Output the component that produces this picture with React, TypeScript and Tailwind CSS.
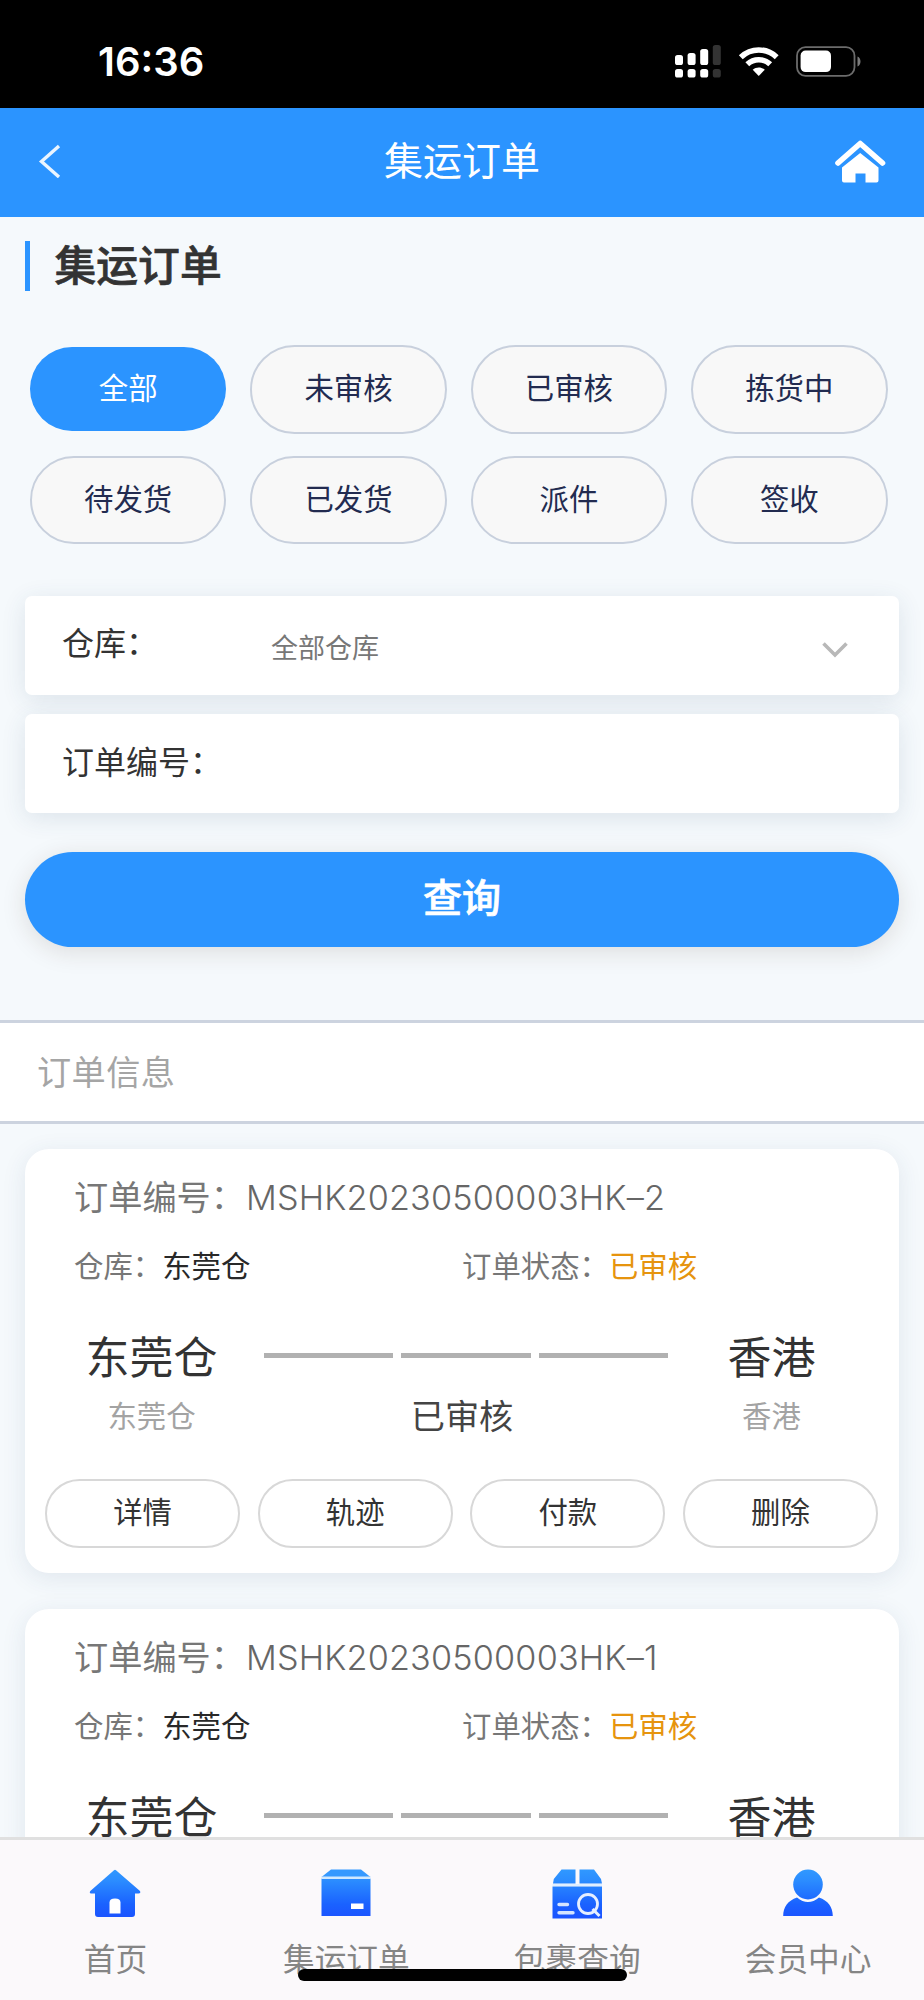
import React from "react";

type Order = { no: string; warehouse: string; status: string; from: string; to: string };

const filters = ["全部", "未审核", "已审核", "拣货中", "待发货", "已发货", "派件", "签收"];

const orders: Order[] = [
  { no: "MSHK20230500003HK–2", warehouse: "东莞仓", status: "已审核", from: "东莞仓", to: "香港" },
  { no: "MSHK20230500003HK–1", warehouse: "东莞仓", status: "已审核", from: "东莞仓", to: "香港" },
];

const actions = ["详情", "轨迹", "付款", "删除"];

function Colon() {
  return <span className="inline-block -translate-y-[0.04em]">：</span>;
}

function StatusBar() {
  return (
    <div className="flex h-[108px] shrink-0 items-start bg-black text-white">
      <span className="ml-[98px] mt-[38px] text-[40px] leading-[48px] font-semibold">16:36</span>
      <div className="ml-auto mr-[62px] mt-[45px] flex items-start">
        <svg width="47" height="33" viewBox="0 0 47 33" fill="#fff">
          <rect x="0" y="10" width="8" height="10" rx="2.6" />
          <rect x="12.6" y="8" width="8" height="12" rx="2.6" />
          <rect x="25.2" y="4" width="8" height="16" rx="2.6" />
          <rect x="37.8" y="0" width="8" height="20" rx="2.6" fill="#333" />
          <rect x="0" y="24" width="8" height="8.6" rx="2.6" />
          <rect x="12.6" y="24" width="8" height="8.6" rx="2.6" />
          <rect x="25.2" y="24" width="8" height="8.6" rx="2.6" />
          <rect x="37.8" y="24" width="8" height="8.6" rx="2.6" fill="#333" />
        </svg>
        <svg className="ml-[16px] mt-px" width="42" height="31" viewBox="0 0 42 31" fill="none" stroke="#fff" strokeWidth="5.6">
          <path d="M2.8 11.2C13 1.6 28.500 1.600 38.700 11.200" />
          <path d="M9.300 18.200C15.800 12.200 25.700 12.200 32.200 18.200" />
          <path d="M14.700 23.700C18.200 20.600 23.300 20.600 26.800 23.700L20.750 30Z" fill="#fff" stroke="none" />
        </svg>
        <svg className="ml-[16px] mt-px" width="66" height="31" viewBox="0 0 66 31">
          <rect x="1" y="1.200" width="57.500" height="28.600" rx="8.500" fill="none" stroke="#6c6c6c" strokeWidth="1.800" />
          <rect x="4.600" y="4.600" width="30.400" height="21.500" rx="5" fill="#fff" />
          <path d="M61.500 10.500C65.500 12 65.500 19 61.500 20.500Z" fill="#7a7a7a" />
        </svg>
      </div>
    </div>
  );
}

function Header() {
  return (
    <header className="grid h-[109px] shrink-0 grid-cols-[1fr_auto_1fr] items-center bg-[#2b94ff] pb-[3px] text-white">
      <svg className="ml-[38px]" width="24" height="34" viewBox="0 0 24 34" fill="none" stroke="#fff" strokeOpacity=".9" strokeWidth="3.4">
        <path d="M21 2L3.500 17.500L21 33" />
      </svg>
      <span className="text-[39px] leading-[56px]">集运订单</span>
      <svg className="mr-[38px] justify-self-end" width="52" height="46" viewBox="0 0 52 46" fill="#fff">
        <path d="M4 25L26.200 5.500L48.500 25" fill="none" stroke="#fff" strokeWidth="5.6" strokeLinecap="round" strokeLinejoin="round" />
        <path d="M26.200 15L44.500 29.500V42.500Q44.500 44.500 42.500 44.500H31.500V35.500H21.500V44.500H10Q8 44.500 8 42.500V29.500Z" />
      </svg>
    </header>
  );
}

function OrderCard({ order }: { order: Order }) {
  return (
    <article className="mx-[25px] h-[424px] shrink-0 rounded-[24px] bg-white pt-[23px] shadow-[0_5px_24px_rgba(40,70,110,0.10)]">
      <div className="pl-[49px] text-[34.2px] leading-[52px] text-[#777]">
        订单编号
        <Colon />
        <span className="ml-px font-light tracking-[0.18px] text-[#666]">{order.no}</span>
      </div>
      <div className="mt-[21px] grid grid-cols-2 text-[29.400px] leading-[44px] text-[#777]">
        <div className="pl-[49px]">
          仓库
          <Colon />
          <span className="text-[#282828]">{order.warehouse}</span>
        </div>
        <div>
          订单状态
          <Colon />
          <span className="text-[#e6940e]">{order.status}</span>
        </div>
      </div>
      <div className="mt-[36px] grid grid-cols-[239px_404px_1fr]">
        <div className="flex flex-col items-center pl-[14px]">
          <div className="text-[44px] leading-[66px] text-[#333]">{order.from}</div>
          <div className="mt-[4px] text-[29.400px] leading-[44px] text-[#a3a3a3]">{order.from}</div>
        </div>
        <div className="flex flex-col items-center">
          <div className="mt-[28px] flex w-full gap-[8px]">
            <div className="h-[5px] flex-1 bg-[#b1b1b1]" />
            <div className="h-[5px] flex-1 bg-[#b1b1b1]" />
            <div className="h-[5px] flex-1 bg-[#b1b1b1]" />
          </div>
          <div className="mt-[33px] pr-[8px] text-[34.200px] leading-[52px] text-[#444]">{order.status}</div>
        </div>
        <div className="flex flex-col items-center pr-[24px]">
          <div className="text-[44px] leading-[66px] text-[#333]">{order.to}</div>
          <div className="mt-[4px] text-[29.400px] leading-[44px] text-[#a3a3a3]">{order.to}</div>
        </div>
      </div>
      <div className="mt-[36px] grid grid-cols-4 gap-[17.500px] pl-[20px] pr-[21px]">
        {actions.map((a) => (
          <button key={a} className="h-[69px] rounded-full border-2 border-[#d8d8d8] text-[29.400px] leading-[44px] text-[#333]">
            {a}
          </button>
        ))}
      </div>
    </article>
  );
}

function TabItem({ label, children }: { label: string; children: React.ReactNode }) {
  return (
    <div className="flex flex-col items-center">
      <svg className="mt-[25px]" width="56" height="56" viewBox="0 0 56 56">
        {children}
      </svg>
      <span className="mt-[17px] text-[31.700px] leading-[44px] text-[#858585]">{label}</span>
    </div>
  );
}

function TabBar() {
  return (
    <nav className="relative grid h-[163px] shrink-0 grid-cols-4 border-t-[3px] border-[#e0e0e0] bg-[#fbf9fb] pr-[0.500px]">
      <TabItem label="首页">
        <defs>
          <linearGradient id="blue" gradientUnits="userSpaceOnUse" x1="0" y1="4" x2="0" y2="51">
            <stop offset="0" stopColor="#3099ff" />
            <stop offset="0.25" stopColor="#2b8cff" />
            <stop offset="0.750" stopColor="#1a62ff" />
            <stop offset="1" stopColor="#1b55ff" />
          </linearGradient>
        </defs>
        <path d="M27 5.200Q28 4.300 29 5.200L53 26Q54 28.500 51.500 28.500H48V49Q48 52 45 52H11Q8 52 8 49V28.500H4Q2 28 3.300 26Z" fill="url(#blue)" />
        <path d="M22.500 48.500V37.500Q22.500 33.500 28 33.500Q33.500 33.500 33.500 37.500V48.500Z" fill="#fff" />
      </TabItem>
      <TabItem label="集运订单">
        <path d="M13 4.500H43L52.500 12H3.500Z" fill="#3599ff" />
        <rect x="3.500" y="13.500" width="49" height="37.500" fill="url(#blue)" />
        <rect x="3.500" y="11.500" width="49" height="2.500" fill="#cfe8ff" />
        <rect x="33" y="38.500" width="12.500" height="5.500" fill="#fff" />
      </TabItem>
      <TabItem label="包裹查询">
        <path d="M12.500 4.500H26.500V18.500H4L4.800 14ZM30.500 4.500H45L52 14L53 18.500H30.500Z" fill="url(#blue)" />
        <rect x="3.500" y="21.500" width="49.500" height="32" fill="url(#blue)" />
        <rect x="3.500" y="19" width="49.500" height="2" fill="#e0efff" />
        <circle cx="39" cy="39" r="9.500" fill="none" stroke="#e6efff" strokeWidth="2.800" />
        <path d="M43.500 44L50.500 51" stroke="#e6efff" strokeWidth="3" />
        <path d="M10 39.500H18.500M10 47.700H24" stroke="#d5e4ff" strokeWidth="3.400" strokeLinecap="round" />
      </TabItem>
      <TabItem label="会员中心">
        <ellipse cx="28" cy="19.500" rx="14.800" ry="15" fill="url(#blue)" />
        <path d="M3.200 51C3.200 42 8 35.500 17 32.500Q28 41.500 39 32.500C48 35.500 52.800 42 52.800 51Z" fill="url(#blue)" />
      </TabItem>
      <div className="absolute bottom-[19px] left-[298px] h-[12px] w-[329px] rounded-full bg-black" />
    </nav>
  );
}

export default function App() {
  return (
    <div className="flex h-[2000px] w-[924px] flex-col overflow-hidden bg-[#f5f9fc] font-['Inter','Noto_Sans_CJK_SC',sans-serif]">
      <StatusBar />
      <Header />
      <main className="flex flex-1 flex-col overflow-hidden">
        <h1 className="ml-[25px] mt-[24px] h-[50px] shrink-0 border-l-[5px] border-[#2b94ff] pl-[24.500px] text-[41.800px] leading-[50px] font-medium text-[#333] [-webkit-text-stroke:0.7px_#333]">
          集运订单
        </h1>
        <div className="mx-[30px] mt-[54px] grid shrink-0 grid-cols-4 gap-x-[24px] gap-y-[22px] pr-[6.500px]">
          {filters.map((f, i) => (
            <button
              key={f}
              className={
                i === 0
                  ? "my-[2px] h-[84px] rounded-full bg-[#2b94ff] text-[29.400px] leading-[44px] text-white"
                  : "h-[88.500px] rounded-full border-2 border-[#c8d0dd] bg-[#f8f8f8] text-[29.400px] leading-[44px] text-[#222b50]"
              }
            >
              {f}
            </button>
          ))}
        </div>
        <div className="mx-[25px] mt-[52px] flex h-[98.500px] shrink-0 items-center rounded-[7px] bg-white pl-[37px] pr-[51px] shadow-[0_5px_24px_rgba(40,70,110,0.12)]">
          <span className="w-[209px] pb-[2px] text-[32px] leading-[48px] text-[#333]">
            仓库
            <Colon />
          </span>
          <span className="pt-[7px] text-[27px] leading-[40px] text-[#777]">全部仓库</span>
          <svg className="ml-auto mt-[10px]" width="26" height="17" viewBox="0 0 26 17" fill="none" stroke="#b8b8b8" strokeWidth="3.600">
            <path d="M1.500 1.500L13 13L24.500 1.500" />
          </svg>
        </div>
        <div className="mx-[25px] mt-[19.500px] flex h-[99px] shrink-0 items-center rounded-[7px] bg-white pl-[37px] shadow-[0_5px_24px_rgba(40,70,110,0.12)]">
          <span className="pb-[2px] text-[32px] leading-[48px] text-[#333]">
            订单编号
            <Colon />
          </span>
        </div>
        <button className="mx-[25px] mt-[39px] h-[95px] shrink-0 rounded-full bg-[#2b94ff] pb-[3px] text-[39px] leading-[56px] font-medium text-white shadow-[0_5px_24px_rgba(60,40,20,0.13)] [-webkit-text-stroke:0.7px_#fff]">
          查询
        </button>
        <div className="mt-[73px] h-[104px] shrink-0 border-y-[3px] border-[#ccd3df] bg-white pl-[37px] text-[34.200px] leading-[100px] tracking-[0.4px] text-[#a5a5a5]">
          订单信息
        </div>
        <div className="flex flex-col gap-[36.500px] pt-[24.500px]">
          {orders.map((o) => (
            <OrderCard key={o.no} order={o} />
          ))}
        </div>
      </main>
      <TabBar />
    </div>
  );
}
